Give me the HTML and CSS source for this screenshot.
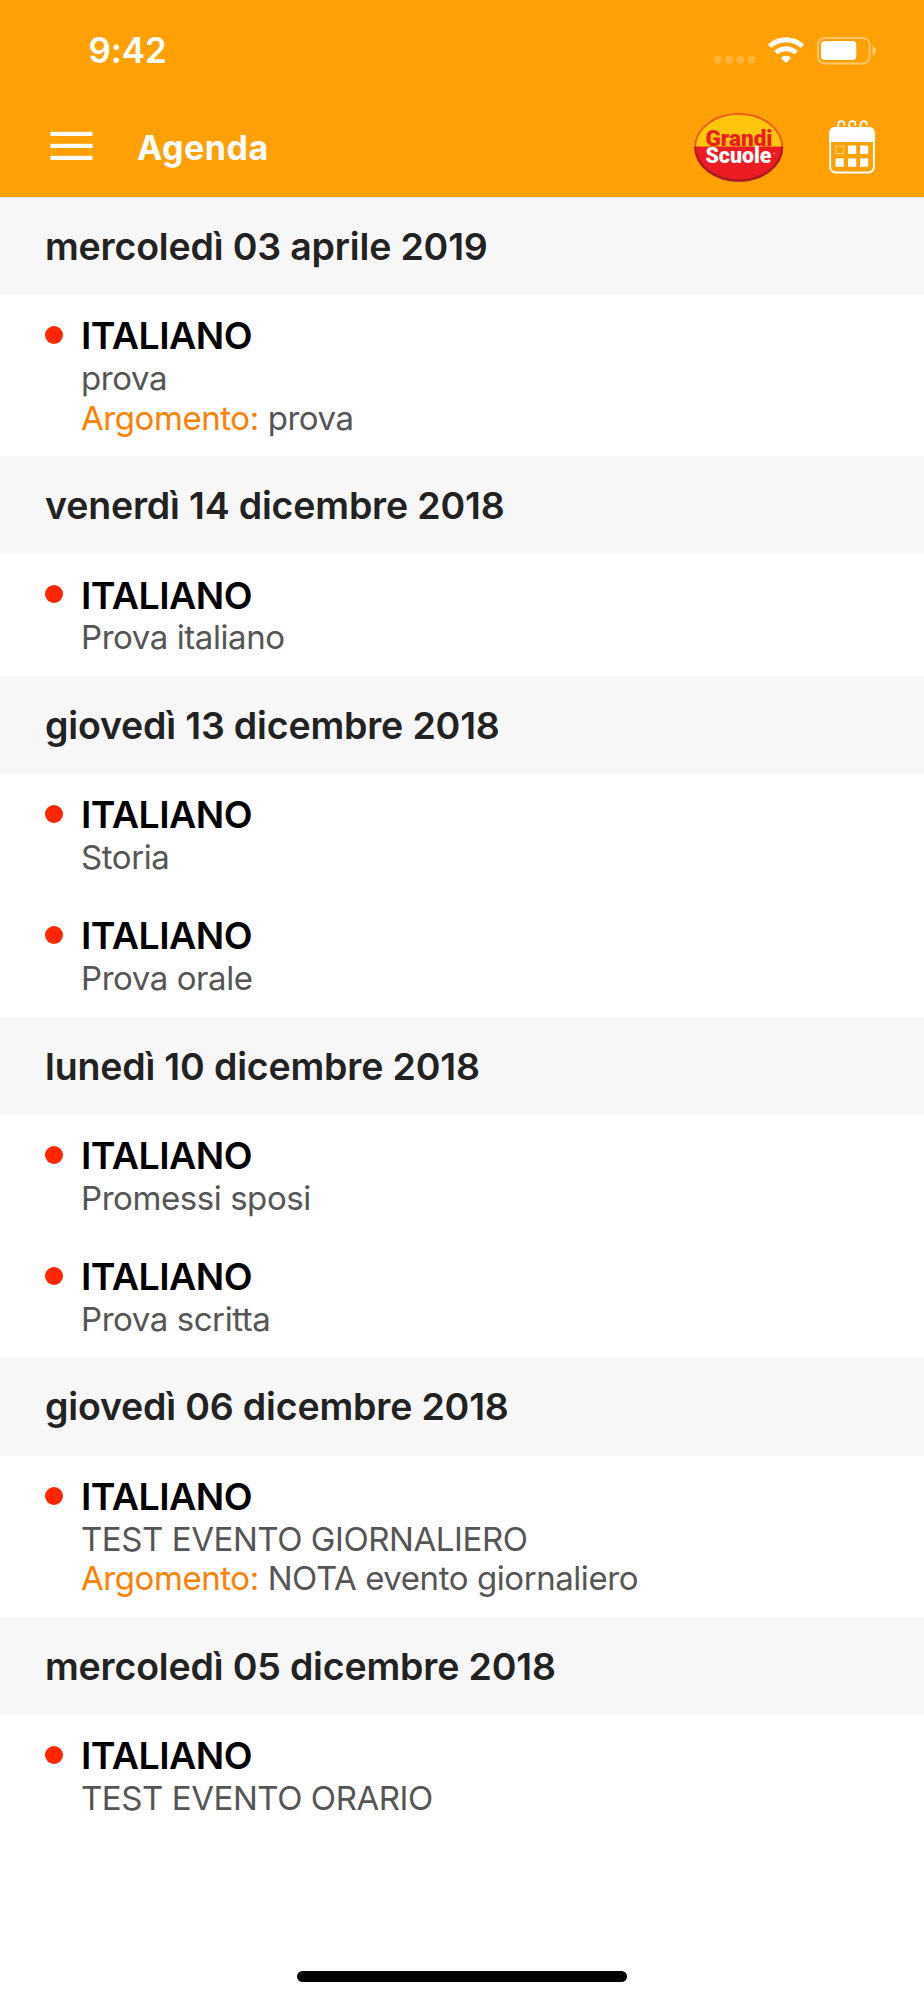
FILE: index.html
```html
<!DOCTYPE html>
<html lang="it">

<head>
    <meta charset="UTF-8">
    <meta name="viewport" content="width=device-width, initial-scale=1.0">
    <title>Agenda</title>
    <link rel="stylesheet" href="styles.css">
</head>

<body>
    <header class="header">
        <div class="status-bar">
            <span class="time">9:42</span>
            <svg class="status-icons" width="164" height="30" viewBox="0 0 164 30">
                <!-- signal -->
                <g fill="#fff" fill-opacity="0.22">
                    <rect x="2" y="21" width="7.6" height="7.4" rx="2" />
                    <rect x="13.2" y="21" width="7.6" height="7.4" rx="2" />
                    <rect x="24.4" y="21" width="7.6" height="7.4" rx="2" />
                    <rect x="35.6" y="21" width="7.6" height="7.4" rx="2" />
                </g>
                <!-- wifi -->
                <g fill="#fff">
                    <path d="M56 9.4A26 26 0 0 1 92 9.4L88.6 13.1A21 21 0 0 0 59.4 13.1Z" />
                    <path d="M62.2 16A17 17 0 0 1 85.8 16L82.3 19.6A12 12 0 0 0 65.7 19.6Z" />
                    <path d="M68.8 22.8A7.6 7.6 0 0 1 79.2 22.8L74 28.2Z" />
                </g>
                <!-- battery -->
                <rect x="106" y="3" width="51.6" height="25.4" rx="6.5" fill="none" stroke="#fff" stroke-opacity="0.4" stroke-width="2" />
                <rect x="109" y="6" width="35.3" height="19" rx="4" fill="#fff" />
                <path d="M160.5 10.8Q164 12.5 164 15.7Q164 19 160.5 20.6Z" fill="#fff" fill-opacity="0.45" />
            </svg>
        </div>
        <div class="nav-bar">
            <svg class="menu" width="44" height="32" viewBox="0 0 44 32" fill="#fff">
                <rect x="0.5" y="0.8" width="42" height="4.2" />
                <rect x="0.5" y="12.8" width="42" height="4.2" />
                <rect x="0.5" y="24.8" width="42" height="4.2" />
            </svg>
            <h1 class="title">Agenda</h1>
            <svg class="logo" width="90" height="72" viewBox="0 -2 90 72">
                <clipPath id="bottom">
                    <rect x="0" y="33.8" width="90" height="37" />
                </clipPath>
                <ellipse cx="44.7" cy="34.4" rx="43.6" ry="33.6" fill="#ffc60b" stroke="#f4511e" stroke-width="1.8" />
                <g clip-path="url(#bottom)">
                    <ellipse cx="44.7" cy="34.4" rx="44.5" ry="34.4" fill="#a81c22" />
                    <ellipse cx="44.7" cy="33.2" rx="42.6" ry="33.2" fill="#ed1c24" />
                </g>
                <text class="logo-top" x="11.5" y="32.6" textLength="67" lengthAdjust="spacingAndGlyphs">Grandi</text>
                <text class="logo-bottom" x="11.5" y="50" textLength="66" lengthAdjust="spacingAndGlyphs">Scuole</text>
                <circle cx="80.3" cy="40.5" r="0.9" fill="#f78b90" />
            </svg>
            <svg class="calendar" width="47" height="54" viewBox="0 0 47 54">
                <g fill="none" stroke="#fff" stroke-width="1.8">
                    <path d="M9.2 8V4.4A3.1 3.2 0 0 1 15.4 4.4V5.8" />
                    <path d="M20.3 8V4.4A3.1 3.2 0 0 1 26.5 4.4V5.8" />
                    <path d="M31.5 8V4.4A3.1 3.2 0 0 1 37.7 4.4V5.8" />
                    <rect x="1.1" y="8" width="43.8" height="44.4" rx="5.5" stroke-width="2" />
                    <rect x="6.8" y="26" width="7.8" height="7.6" stroke-opacity="0.45" stroke-width="1.2" />
                </g>
                <g fill="#fff">
                    <path d="M0.3 22V13Q0.3 7 6.3 7H39.7Q45.7 7 45.7 13V22Z" />
                    <rect x="19" y="25.5" width="8.2" height="8.4" />
                    <rect x="31" y="25.5" width="8.2" height="8.4" />
                    <rect x="6.6" y="38.4" width="8.2" height="8.4" />
                    <rect x="19" y="38.4" width="8.2" height="8.4" />
                    <rect x="31" y="38.4" width="8.2" height="8.4" />
                </g>
            </svg>
        </div>
    </header>

    <main class="agenda">
        <section>
            <h2 class="date">mercoledì 03 aprile 2019</h2>
            <article class="event">
                <h3>ITALIANO</h3>
                <p>prova</p>
                <p><span class="label">Argomento:</span> prova</p>
            </article>
        </section>

        <section>
            <h2 class="date">venerdì 14 dicembre 2018</h2>
            <article class="event">
                <h3>ITALIANO</h3>
                <p>Prova italiano</p>
            </article>
        </section>

        <section>
            <h2 class="date">giovedì 13 dicembre 2018</h2>
            <article class="event">
                <h3>ITALIANO</h3>
                <p>Storia</p>
            </article>
            <article class="event">
                <h3>ITALIANO</h3>
                <p>Prova orale</p>
            </article>
        </section>

        <section>
            <h2 class="date">lunedì 10 dicembre 2018</h2>
            <article class="event">
                <h3>ITALIANO</h3>
                <p>Promessi sposi</p>
            </article>
            <article class="event">
                <h3>ITALIANO</h3>
                <p>Prova scritta</p>
            </article>
        </section>

        <section>
            <h2 class="date">giovedì 06 dicembre 2018</h2>
            <article class="event">
                <h3>ITALIANO</h3>
                <p>TEST EVENTO GIORNALIERO</p>
                <p><span class="label">Argomento:</span> NOTA evento giornaliero</p>
            </article>
        </section>

        <section>
            <h2 class="date">mercoledì 05 dicembre 2018</h2>
            <article class="event">
                <h3>ITALIANO</h3>
                <p>TEST EVENTO ORARIO</p>
            </article>
        </section>
    </main>

    <div class="home-indicator"></div>
</body>

</html>
```

FILE: styles.css
```css
* {
    box-sizing: border-box;
}

body {
    margin: 0;
    height: 2000px;
    display: flex;
    flex-direction: column;
    background: #fff;
    color: #555;
    font-family: Inter, "Liberation Sans", sans-serif;
    overflow: hidden;
}

h1,
h2,
h3,
p {
    margin: 0;
}

svg {
    display: block;
    flex-shrink: 0;
}

.header {
    position: relative;
    height: 197px;
    background: #ffa005;
    color: #fff;
    box-shadow: 0 1px 0 #e4e4e8;
}

.status-bar {
    height: 99px;
    padding: 0 48px 0 88.5px;
    display: flex;
    align-items: center;
    justify-content: space-between;
}

.time {
    font-size: 35px;
    font-weight: 600;
    letter-spacing: -0.1px;
}

.nav-bar {
    height: 96px;
    padding: 0 48px 0 50px;
    display: flex;
    align-items: center;
}

.title {
    margin-left: 43px;
    font-size: 34px;
    font-weight: 700;
    letter-spacing: 0.5px;
}

.logo {
    margin-left: auto;
}

.calendar {
    margin-left: 45px;
}

.logo-top,
.logo-bottom {
    font-family: Roboto, sans-serif;
    font-size: 21.5px;
    font-weight: 900;
}

.logo-top {
    fill: #ed1c24;
}

.logo-bottom {
    fill: #fff;
}

.date {
    height: 98.1px;
    padding-left: 45px;
    background: #f7f7f7;
    color: #222;
    font-size: 37.5px;
    font-weight: 600;
    line-height: 100.4px;
    letter-spacing: -0.17px;
    white-space: nowrap;
}

.event {
    position: relative;
    padding: 18.2px 0 17.6px 81px;
}

/* red marker next to the subject */
.event::before {
    content: "";
    position: absolute;
    left: 45px;
    top: 31px;
    width: 18px;
    height: 18px;
    border-radius: 50%;
    background: #ff2600;
}

.event h3 {
    color: #000;
    font-size: 37.5px;
    font-weight: 600;
    line-height: 45.8px;
    letter-spacing: -0.55px;
}

.event p {
    font-size: 33px;
    line-height: 39.8px;
    letter-spacing: -0.43px;
}

.label {
    color: #ff8000;
}

.home-indicator {
    width: 330px;
    height: 11px;
    margin: auto auto 18px;
    border-radius: 6px;
    background: #000;
}
```
